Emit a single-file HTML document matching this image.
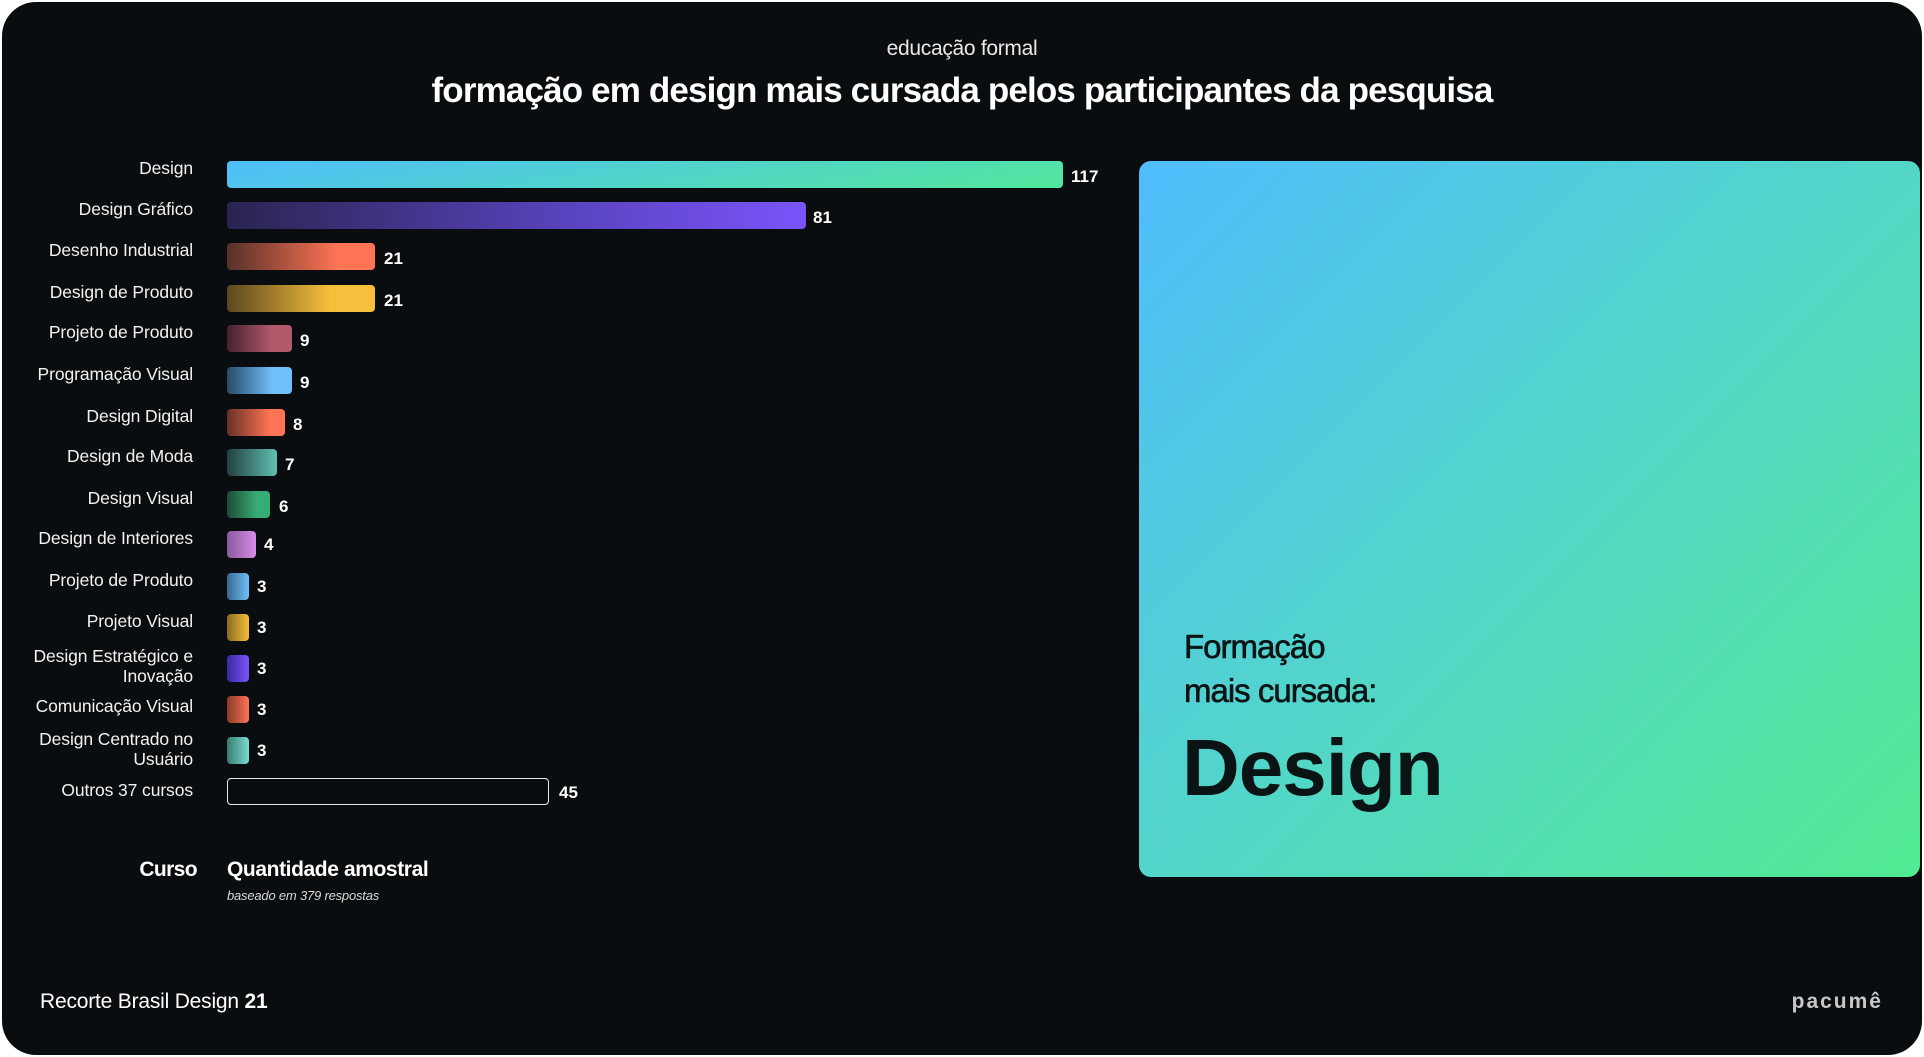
<!DOCTYPE html>
<html><head><meta charset="utf-8"><style>
*{margin:0;padding:0;box-sizing:border-box}
html,body{width:1924px;height:1057px;background:#fff;overflow:hidden}
body{font-family:"Liberation Sans",sans-serif;color:#fff;position:relative}
.card{position:absolute;left:2px;top:2px;width:1920px;height:1053px;background:#0a0d10;border-radius:34px;overflow:hidden}
.abs{position:absolute;white-space:nowrap}
.lbl{position:absolute;right:1731px;font-size:17.5px;text-align:right;line-height:20px;letter-spacing:-0.1px;color:#f2f2f2}
.bar{position:absolute;left:227px;height:27px;border-radius:4px}
.num{position:absolute;font-size:17px;font-weight:bold;color:#fff}
.panel{position:absolute;left:1139px;top:161px;width:781px;height:716px;border-radius:12px;background:linear-gradient(135deg,#50bdfd 0%,#52d6c8 50%,#52ea92 100%)}
</style></head><body>
<div class="card"></div>
<div class="abs" style="left:0;width:1924px;text-align:center;top:37px;font-size:21px;color:#e8e8e8;letter-spacing:-0.3px">educação formal</div>
<div class="abs" style="left:0;width:1924px;text-align:center;top:71px;font-size:35px;font-weight:bold;letter-spacing:-0.85px">formação em design mais cursada pelos participantes da pesquisa</div>

<div class="lbl" style="top:158px">Design</div>
<div class="bar" style="top:161px;width:836px;background:linear-gradient(170deg,#4fbefc,#52e79a)"></div>
<div class="num" style="left:1071px;top:167px">117</div>

<div class="lbl" style="top:199px">Design Gráfico</div>
<div class="bar" style="top:202px;width:579px;background:linear-gradient(90deg,#2a2450,#5a44c0 60%,#7a54fa)"></div>
<div class="num" style="left:813px;top:208px">81</div>

<div class="lbl" style="top:240px">Desenho Industrial</div>
<div class="bar" style="top:243px;width:148px;background:linear-gradient(90deg,#56302a,#ff7454 75%)"></div>
<div class="num" style="left:384px;top:249px">21</div>

<div class="lbl" style="top:282px">Design de Produto</div>
<div class="bar" style="top:285px;width:148px;background:linear-gradient(90deg,#5a4620,#f7bf3c 70%)"></div>
<div class="num" style="left:384px;top:291px">21</div>

<div class="lbl" style="top:322px">Projeto de Produto</div>
<div class="bar" style="top:325px;width:65px;background:linear-gradient(90deg,#45222f,#b25a6c 70%)"></div>
<div class="num" style="left:300px;top:331px">9</div>

<div class="lbl" style="top:364px">Programação Visual</div>
<div class="bar" style="top:367px;width:65px;background:linear-gradient(90deg,#2a4a68,#70bff8 70%)"></div>
<div class="num" style="left:300px;top:373px">9</div>

<div class="lbl" style="top:406px">Design Digital</div>
<div class="bar" style="top:409px;width:58px;background:linear-gradient(90deg,#6a3028,#ff7454 75%)"></div>
<div class="num" style="left:293px;top:415px">8</div>

<div class="lbl" style="top:446px">Design de Moda</div>
<div class="bar" style="top:449px;width:50px;background:linear-gradient(90deg,#234040,#5fc0b2)"></div>
<div class="num" style="left:285px;top:455px">7</div>

<div class="lbl" style="top:488px">Design Visual</div>
<div class="bar" style="top:491px;width:43px;background:linear-gradient(90deg,#1e4a36,#36ad74 70%)"></div>
<div class="num" style="left:279px;top:497px">6</div>

<div class="lbl" style="top:528px">Design de Interiores</div>
<div class="bar" style="top:531px;width:29px;background:linear-gradient(90deg,#8a5a9e,#d88ce8)"></div>
<div class="num" style="left:264px;top:535px">4</div>

<div class="lbl" style="top:570px">Projeto de Produto</div>
<div class="bar" style="top:573px;width:22px;background:linear-gradient(90deg,#3a6890,#70bff8)"></div>
<div class="num" style="left:257px;top:577px">3</div>

<div class="lbl" style="top:611px">Projeto Visual</div>
<div class="bar" style="top:614px;width:22px;background:linear-gradient(90deg,#8a6a20,#f7bf3c)"></div>
<div class="num" style="left:257px;top:618px">3</div>

<div class="lbl" style="top:646px">Design Estratégico e<br>Inovação</div>
<div class="bar" style="top:655px;width:22px;background:linear-gradient(90deg,#3a2aa0,#7a54fa)"></div>
<div class="num" style="left:257px;top:659px">3</div>

<div class="lbl" style="top:696px">Comunicação Visual</div>
<div class="bar" style="top:696px;width:22px;background:linear-gradient(90deg,#8a3a2a,#ff7454)"></div>
<div class="num" style="left:257px;top:700px">3</div>

<div class="lbl" style="top:729px">Design Centrado no<br>Usuário</div>
<div class="bar" style="top:737px;width:22px;background:linear-gradient(90deg,#3a7a70,#7adcd0)"></div>
<div class="num" style="left:257px;top:741px">3</div>

<div class="lbl" style="top:780px">Outros 37 cursos</div>
<div class="bar" style="top:778px;width:322px;border:1.5px solid #e8e8e8;border-radius:4px"></div>
<div class="num" style="left:559px;top:783px">45</div>

<div class="abs" style="right:1727px;top:858px;font-size:21px;font-weight:bold;letter-spacing:-0.6px">Curso</div>
<div class="abs" style="left:227px;top:858px;font-size:21px;font-weight:bold;letter-spacing:-0.4px">Quantidade amostral</div>
<div class="abs" style="left:227px;top:888px;font-size:13px;font-style:italic;color:#d8d8d8;letter-spacing:-0.2px">baseado em 379 respostas</div>

<div class="panel"></div>
<div class="abs" style="left:1184px;top:625px;font-size:33px;color:#0b1414;letter-spacing:-1px;line-height:44px;-webkit-text-stroke:0.6px #0b1414">Formação<br>mais cursada:</div>
<div class="abs" style="left:1182px;top:722px;font-size:80px;font-weight:bold;color:#0b1414;letter-spacing:-1px">Design</div>

<div class="abs" style="left:40px;top:990px;font-size:21px;letter-spacing:-0.2px">Recorte Brasil Design <b>21</b></div>
<div class="abs" style="right:41px;top:990px;font-size:21px;font-weight:bold;color:#c8c8c8;letter-spacing:2px">pacumê</div>
</body></html>
